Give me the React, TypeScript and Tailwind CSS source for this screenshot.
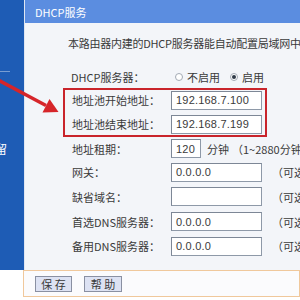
import React from "react";

const Box = ({ value, w = "w-[91px]" }: { value: string; w?: string }) => (
  <div
    className={`${w} h-[19px] shrink-0 bg-white border border-[#8e99a8] border-t-[#7d8796] border-l-[#7d8796] flex items-center pl-[4px] font-['Liberation_Sans',sans-serif] text-[11px] tracking-[0.2px] text-[#3a3a3a] overflow-hidden whitespace-nowrap`}
  >
    {value}
  </div>
);

const Row = ({
  label,
  value,
  h,
  extra,
}: {
  label: string;
  value: string;
  h: string;
  extra?: React.ReactNode;
}) => (
  <div className={`${h} flex items-center pl-[47px] whitespace-nowrap`}>
    <div className="w-[99px] shrink-0">{label}</div>
    <Box value={value} />
    {extra}
  </div>
);

export default function App() {
  return (
    <div className="w-[300px] h-[300px] relative overflow-hidden bg-white font-['Noto_Sans_CJK_SC','Noto_Sans',sans-serif] text-[11px] leading-[14px] text-[#3a3a3a]">
      <div className="flex h-[270px]">
        <div className="w-[24px] shrink-0 bg-[#1e5cb5] flex flex-col">
          <div className="mt-[71px] w-[10px] h-px bg-white/40" />
          <div className="mt-[70px] -ml-[5px] text-white text-[12px] leading-[14px]">
            留
          </div>
        </div>
        <div className="flex-1 flex flex-col border-l border-[#dfe6f2]">
          <div className="h-[23px] shrink-0 bg-[#5b8de0] text-white flex items-center pl-[10px]">
            DHCP服务
          </div>
          <div className="flex-1 bg-[#f3f5f9] flex flex-col">
            <div className="mt-[12px] h-[16px] leading-[16px] pl-[43px] whitespace-nowrap tracking-[-0.25px]">
              本路由器内建的DHCP服务器能自动配置局域网中各计算机的TCP/IP协议。
            </div>
            <div className="mt-[15px] h-[22px] flex items-center pl-[46px] whitespace-nowrap">
              <div className="w-[104px] shrink-0">DHCP服务器：</div>
              <div className="w-[8px] h-[8px] rounded-full border border-[#a3aab5] bg-white shrink-0" />
              <div className="ml-[4px]">不启用</div>
              <div className="ml-[10px] w-[8px] h-[8px] rounded-full border border-[#a3aab5] bg-white shrink-0 flex items-center justify-center">
                <div className="w-[4px] h-[4px] rounded-full bg-[#2f3a48]" />
              </div>
              <div className="ml-[4px]">启用</div>
            </div>
            <div className="ml-[38px] w-[204px] border-2 border-[#c9242b] pl-[7px] pb-[1px] flex flex-col gap-[4px]">
              <div className="h-[20px] flex items-center whitespace-nowrap">
                <div className="w-[99px] shrink-0">地址池开始地址：</div>
                <Box value="192.168.7.100" />
              </div>
              <div className="h-[20px] flex items-center whitespace-nowrap">
                <div className="w-[99px] shrink-0">地址池结束地址：</div>
                <Box value="192.168.7.199" />
              </div>
            </div>
            <div className="h-[23px] flex items-center pl-[47px] whitespace-nowrap">
              <div className="w-[99px] shrink-0">地址租期：</div>
              <Box value="120" w="w-[30px]" />
              <div className="ml-[6px]">分钟</div>
              <div className="ml-[3px]">（1~2880分钟，缺省为120分钟）</div>
            </div>
            <Row
              h="h-[24px]"
              label="网关："
              value="0.0.0.0"
              extra={<div className="ml-[10px]">（可选）</div>}
            />
            <Row
              h="h-[25px]"
              label="缺省域名："
              value=""
              extra={<div className="ml-[10px]">（可选）</div>}
            />
            <Row
              h="h-[25px]"
              label="首选DNS服务器："
              value="0.0.0.0"
              extra={<div className="ml-[10px]">（可选）</div>}
            />
            <Row
              h="h-[24px]"
              label="备用DNS服务器："
              value="0.0.0.0"
              extra={<div className="ml-[10px]">（可选）</div>}
            />
          </div>
        </div>
      </div>
      <div className="ml-[23px] h-[27px] border border-[#f0c89c] bg-[#fbfbfd] flex items-center pl-[11px] gap-[12px]">
        <div className="w-[37px] h-[16px] border border-[#8a90a2] bg-[#dde2f3] flex items-center justify-center leading-[14px]">
          保 存
        </div>
        <div className="w-[38px] h-[16px] border border-[#8a90a2] bg-[#dde2f3] flex items-center justify-center leading-[14px]">
          帮 助
        </div>
      </div>
      <svg
        className="absolute inset-0 pointer-events-none"
        width="300"
        height="300"
        viewBox="0 0 300 300"
      >
        <line x1="-2" y1="80" x2="46" y2="105.5" stroke="#d6252a" strokeWidth="3.5" />
        <polygon points="58.5,112 42.5,112.5 49.5,99" fill="#d6252a" />
      </svg>
    </div>
  );
}
